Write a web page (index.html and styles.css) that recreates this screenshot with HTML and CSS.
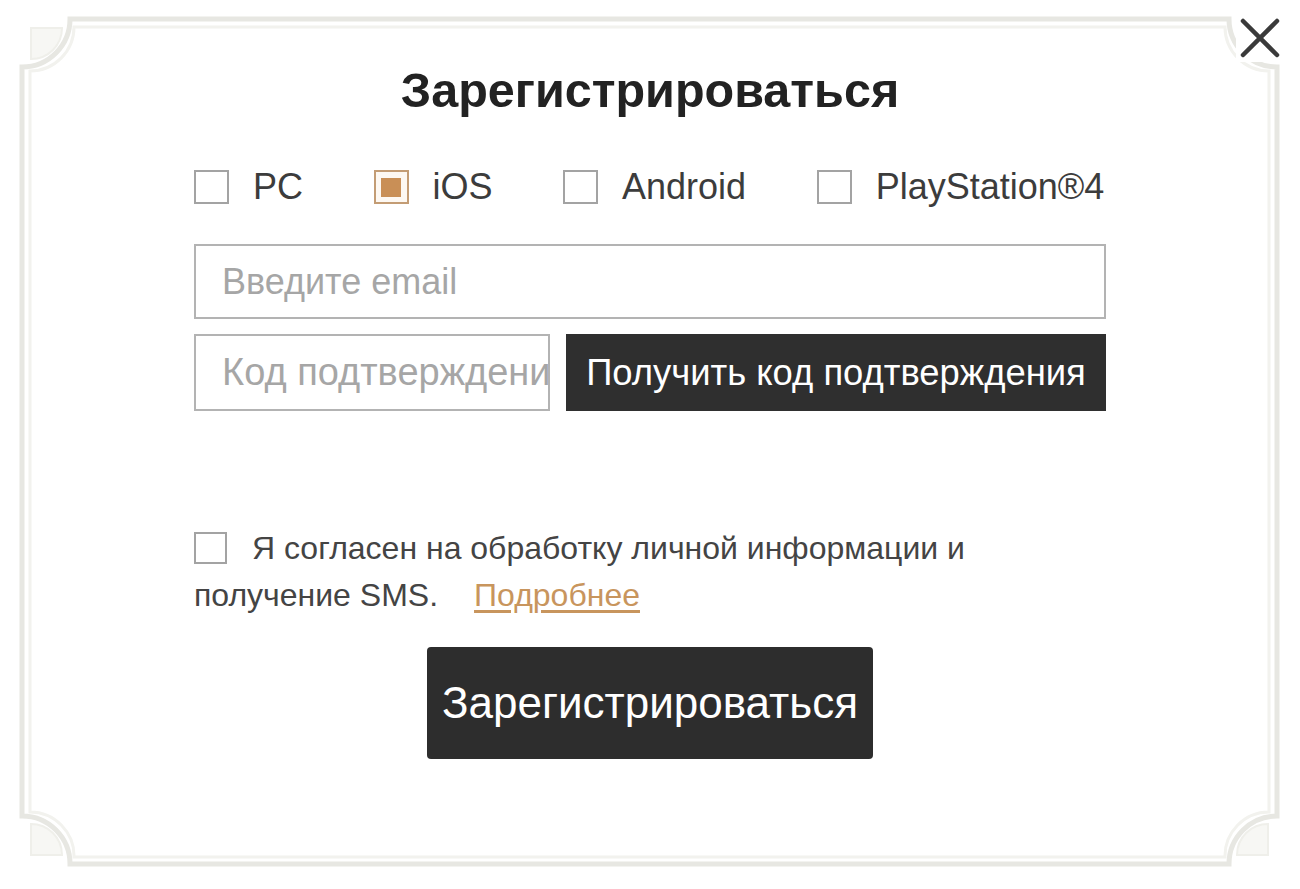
FILE: index.html
```html
<!DOCTYPE html>
<html lang="ru">
<head>
<meta charset="utf-8">
<title>Зарегистрироваться</title>
<link rel="stylesheet" href="styles.css">
</head>
<body>
<div class="dialog">
  <svg class="frame" width="1300" height="889" viewBox="0 0 1300 889" aria-hidden="true">
    <path class="frame-outer" d="M70 19 H1229 A48 48 0 0 0 1277 67 V816 A48 48 0 0 0 1229 864 H70 A48 48 0 0 0 22 816 V67 A48 48 0 0 0 70 19 Z"/>
    <path class="frame-inner" d="M74 27 H1225 A44 44 0 0 0 1269 71 V812 A44 44 0 0 0 1225 857 H74 A44 44 0 0 0 30 812 V71 A44 44 0 0 0 74 27 Z"/>
    <path class="frame-pie" d="M31 28 H62 A31 31 0 0 1 31 59 Z"/>
    <path class="frame-pie" d="M31 855 H62 A31 31 0 0 0 31 824 Z"/>
    <path class="frame-pie" d="M1268 855 H1237 A31 31 0 0 1 1268 824 Z"/>
  </svg>

  <button class="close" type="button" aria-label="Закрыть">
    <svg width="48" height="48" viewBox="0 0 48 48"><path d="M7 7 L41 41 M41 7 L7 41"/></svg>
  </button>

  <div class="content">
    <h1 class="title">Зарегистрироваться</h1>

    <div class="platforms">
      <label class="platform"><span class="box"></span><span>PC</span></label>
      <label class="platform"><span class="box box-checked"><span class="box-fill"></span></span><span>iOS</span></label>
      <label class="platform"><span class="box"></span><span>Android</span></label>
      <label class="platform"><span class="box"></span><span>PlayStation®4</span></label>
    </div>

    <input class="field field-email" type="text" placeholder="Введите email">

    <div class="code-row">
      <input class="field field-code" type="text" placeholder="Код подтверждения">
      <button class="btn-code" type="button">Получить код подтверждения</button>
    </div>

    <div class="agree">
      <div class="agree-line"><span class="agree-box"></span><span>Я согласен на обработку личной информации и</span></div>
      <div class="agree-line"><span>получение SMS.</span><a class="more" href="#">Подробнее</a></div>
    </div>

    <div class="submit-row">
      <button class="btn-submit" type="button">Зарегистрироваться</button>
    </div>
  </div>
</div>
</body>
</html>
```

FILE: styles.css
```css
* { box-sizing: border-box; }

html, body {
  margin: 0;
  padding: 0;
  background: #ffffff;
}

body {
  font-family: "Liberation Sans", Arial, sans-serif;
  color: #3a3a3a;
}

.dialog {
  position: relative;
  width: 1300px;
  height: 889px;
  overflow: hidden;
}

.frame {
  position: absolute;
  left: 0;
  top: 0;
  pointer-events: none;
}

.frame-outer {
  fill: none;
  stroke: #e7e7e2;
  stroke-width: 5;
}

.frame-inner {
  fill: none;
  stroke: #f2f2ee;
  stroke-width: 3;
}

.frame-pie {
  fill: #f7f7f4;
  stroke: #efefea;
  stroke-width: 2;
}

.close {
  position: absolute;
  left: 1236px;
  top: 14px;
  width: 48px;
  height: 48px;
  padding: 0;
  border: 0;
  background: #ffffff;
  cursor: pointer;
}

.close svg {
  display: block;
}

.close path {
  stroke: #3a3a3a;
  stroke-width: 4.5;
  stroke-linecap: round;
  fill: none;
}

.content {
  position: relative;
  width: 912px;
  margin-left: 194px;
  padding-top: 62px;
}

.title {
  margin: 0;
  font-size: 48.5px;
  line-height: 56px;
  font-weight: 700;
  text-align: center;
  color: #222222;
}

.platforms {
  display: flex;
  gap: 70.5px;
  margin-top: 52px;
  height: 34px;
}

.platform {
  display: flex;
  align-items: center;
  gap: 24px;
  font-size: 36px;
  line-height: 34px;
  color: #3c3c3c;
}

.box {
  display: flex;
  align-items: center;
  justify-content: center;
  width: 35px;
  height: 34px;
  border: 2px solid #a3a3a3;
  background: #ffffff;
}

.box-checked {
  border-color: #c39c74;
  background: #fdf8f2;
}

.box-fill {
  width: 20px;
  height: 19px;
  background: #c98f56;
}

.field {
  display: block;
  width: 100%;
  margin: 0;
  border: 2px solid #b3b3b3;
  background: #ffffff;
  padding: 0 0 0 26px;
  font-family: "Liberation Sans", Arial, sans-serif;
  font-size: 36px;
  color: #333;
  outline: none;
}

.field::placeholder {
  color: #a6a6a6;
  opacity: 1;
}

.field-email {
  margin-top: 40px;
  height: 75px;
}

.code-row {
  display: flex;
  gap: 16px;
  margin-top: 15px;
  height: 77px;
}

.field-code {
  width: 356px;
  height: 77px;
  flex: none;
  font-size: 38px;
}

.btn-code {
  flex: 1;
  border: 0;
  margin: 0;
  padding: 0;
  background: #2f2f2f;
  color: #ffffff;
  font-family: "Liberation Sans", Arial, sans-serif;
  font-size: 36.4px;
  cursor: pointer;
}

.agree {
  margin-top: 114px;
  font-size: 32px;
  line-height: 47px;
  color: #444444;
}

.agree-line {
  display: flex;
  align-items: flex-start;
  height: 47px;
  white-space: nowrap;
}

.agree-box {
  flex: none;
  width: 33px;
  height: 32px;
  margin: 7px 25px 0 0;
  border: 2px solid #a3a3a3;
}

.more {
  margin-left: 36px;
  color: #c8955d;
  text-decoration: underline;
  text-underline-offset: 4px;
}

.submit-row {
  display: flex;
  justify-content: center;
  margin-top: 28px;
}

.btn-submit {
  width: 446px;
  height: 112px;
  border: 0;
  border-radius: 4px;
  margin: 0;
  padding: 0;
  background: #2d2d2d;
  color: #ffffff;
  font-family: "Liberation Sans", Arial, sans-serif;
  font-size: 44px;
  cursor: pointer;
}
```
